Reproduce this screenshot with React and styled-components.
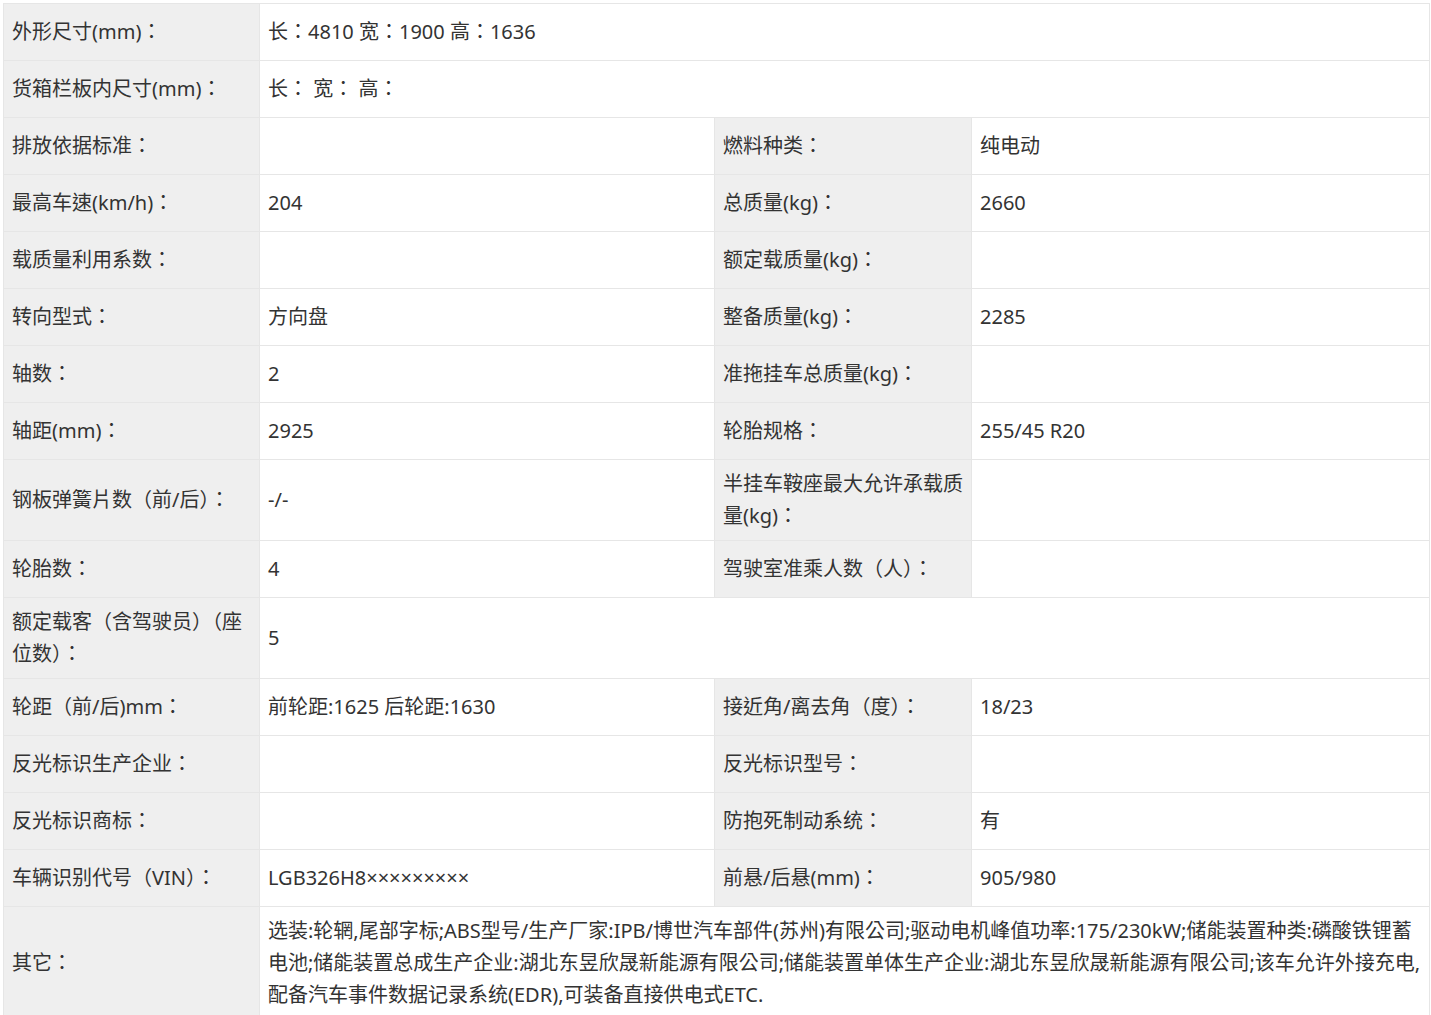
import React from "react";
import styled, { createGlobalStyle } from "styled-components";

const Global = createGlobalStyle`
  body { margin: 0; padding: 3px; background: #fff; font-family: "Noto Sans", "Noto Sans CJK TC", sans-serif; }
`;

const Table = styled.table`
  border-collapse: collapse;
  table-layout: fixed;
  width: 1426px;
  color: #333;
  font-size: 20px;
`;

const Col = styled.col`
  width: ${p => p.$w}px;
`;

const Cell = styled.td`
  border: 1px solid #e6e6e6;
  background: ${p => (p.$label ? "#efefef" : "#fff")};
  height: 40px;
  padding: 8px;
  line-height: 32px;
  vertical-align: middle;
  word-break: break-all;
`;

const rows = [
  [["外形尺寸(mm)：", "长：4810 宽：1900 高：1636"]],
  [["货箱栏板内尺寸(mm)：", "长： 宽： 高："]],
  [["排放依据标准：", ""], ["燃料种类：", "纯电动"]],
  [["最高车速(km/h)：", "204"], ["总质量(kg)：", "2660"]],
  [["载质量利用系数：", ""], ["额定载质量(kg)：", ""]],
  [["转向型式：", "方向盘"], ["整备质量(kg)：", "2285"]],
  [["轴数：", "2"], ["准拖挂车总质量(kg)：", ""]],
  [["轴距(mm)：", "2925"], ["轮胎规格：", "255/45 R20"]],
  [["钢板弹簧片数（前/后）：", "-/-"], ["半挂车鞍座最大允许承载质量(kg)：", ""]],
  [["轮胎数：", "4"], ["驾驶室准乘人数（人）：", ""]],
  [["额定载客（含驾驶员）（座位数）：", "5"]],
  [["轮距（前/后)mm：", "前轮距:1625 后轮距:1630"], ["接近角/离去角（度）：", "18/23"]],
  [["反光标识生产企业：", ""], ["反光标识型号：", ""]],
  [["反光标识商标：", ""], ["防抱死制动系统：", "有"]],
  [["车辆识别代号（VIN）：", "LGB326H8×××××××××"], ["前悬/后悬(mm)：", "905/980"]],
  [["其它：", "选装:轮辋,尾部字标;ABS型号/生产厂家:IPB/博世汽车部件(苏州)有限公司;驱动电机峰值功率:175/230kW;储能装置种类:磷酸铁锂蓄电池;储能装置总成生产企业:湖北东昱欣晟新能源有限公司;储能装置单体生产企业:湖北东昱欣晟新能源有限公司;该车允许外接充电,配备汽车事件数据记录系统(EDR),可装备直接供电式ETC."]],
];

export default function App() {
  return (
    <>
      <Global />
      <Table>
        <colgroup>
          <Col $w={256} />
          <Col $w={455} />
          <Col $w={257} />
          <Col $w={458} />
        </colgroup>
        <tbody>
          {rows.map((r, i) => (
            <tr key={i}>
              {r.length === 1 ? (
                <>
                  <Cell $label>{r[0][0]}</Cell>
                  <Cell colSpan={3}>{r[0][1]}</Cell>
                </>
              ) : (
                r.map((p, j) => (
                  <React.Fragment key={j}>
                    <Cell $label>{p[0]}</Cell>
                    <Cell>{p[1]}</Cell>
                  </React.Fragment>
                ))
              )}
            </tr>
          ))}
        </tbody>
      </Table>
    </>
  );
}
